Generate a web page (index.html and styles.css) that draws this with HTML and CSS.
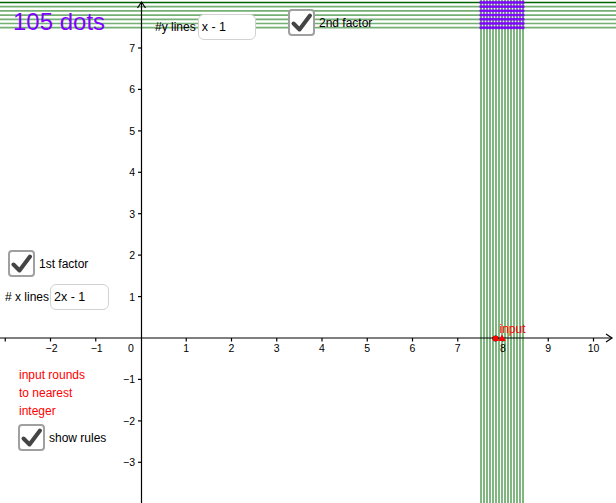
FILE: index.html
```html
<!DOCTYPE html>
<html>
<head>
<meta charset="utf-8">
<link rel="stylesheet" href="styles.css">
</head>
<body>
<div class="applet">
  <svg class="graph" width="616" height="503" viewBox="0 0 616 503">
    <defs>
      <pattern id="dotpat" x="479.5" y="0.4" width="3" height="4.2" patternUnits="userSpaceOnUse">
        <circle cx="1.5" cy="2.1" r="1.6" fill="#7f00ff"/>
      </pattern>
    </defs>
    <g class="vlines">
      <line x1="481" y1="0" x2="481" y2="503"/><line x1="484" y1="0" x2="484" y2="503"/><line x1="487" y1="0" x2="487" y2="503"/>
      <line x1="490" y1="0" x2="490" y2="503"/><line x1="493" y1="0" x2="493" y2="503"/><line x1="496" y1="0" x2="496" y2="503"/>
      <line x1="499" y1="0" x2="499" y2="503"/><line x1="502" y1="0" x2="502" y2="503"/><line x1="505" y1="0" x2="505" y2="503"/>
      <line x1="508" y1="0" x2="508" y2="503"/><line x1="511" y1="0" x2="511" y2="503"/><line x1="514" y1="0" x2="514" y2="503"/>
      <line x1="517" y1="0" x2="517" y2="503"/><line x1="520" y1="0" x2="520" y2="503"/><line x1="523" y1="0" x2="523" y2="503"/>
    </g>
    <g class="hlines">
      <line class="top" x1="0" y1="2.5" x2="616" y2="2.5"/>
      <line x1="0" y1="6.7" x2="616" y2="6.7"/>
      <line x1="0" y1="10.9" x2="616" y2="10.9"/>
      <line x1="0" y1="15.1" x2="616" y2="15.1"/>
      <line x1="0" y1="19.3" x2="616" y2="19.3"/>
      <line x1="0" y1="23.5" x2="616" y2="23.5"/>
      <line x1="0" y1="27.7" x2="616" y2="27.7"/>
    </g>
    <rect x="479.5" y="0.4" width="45" height="29.4" fill="url(#dotpat)"/>
    <g class="axes">
      <line x1="0" y1="338" x2="612" y2="338"/>
      <polyline class="arrow" points="606,334 612,338 606,342"/>
      <line x1="141.5" y1="503" x2="141.5" y2="2"/>
      <polyline class="arrow" points="137.5,8 141.5,2 145.5,8"/>
      <g class="ticks">
        <line x1="5.25" y1="338" x2="5.25" y2="341.5"/><line x1="50.5" y1="338" x2="50.5" y2="341.5"/>
        <line x1="95.75" y1="338" x2="95.75" y2="341.5"/><line x1="186.25" y1="338" x2="186.25" y2="341.5"/>
        <line x1="231.5" y1="338" x2="231.5" y2="341.5"/><line x1="276.75" y1="338" x2="276.75" y2="341.5"/>
        <line x1="322" y1="338" x2="322" y2="341.5"/><line x1="367.25" y1="338" x2="367.25" y2="341.5"/>
        <line x1="412.5" y1="338" x2="412.5" y2="341.5"/><line x1="457.75" y1="338" x2="457.75" y2="341.5"/>
        <line x1="503" y1="338" x2="503" y2="341.5"/><line x1="548.25" y1="338" x2="548.25" y2="341.5"/>
        <line x1="593.5" y1="338" x2="593.5" y2="341.5"/>
        <line x1="138" y1="48" x2="141.5" y2="48"/><line x1="138" y1="89.4" x2="141.5" y2="89.4"/>
        <line x1="138" y1="130.9" x2="141.5" y2="130.9"/><line x1="138" y1="172.3" x2="141.5" y2="172.3"/>
        <line x1="138" y1="213.7" x2="141.5" y2="213.7"/><line x1="138" y1="255.1" x2="141.5" y2="255.1"/>
        <line x1="138" y1="296.6" x2="141.5" y2="296.6"/><line x1="138" y1="379.4" x2="141.5" y2="379.4"/>
        <line x1="138" y1="420.9" x2="141.5" y2="420.9"/><line x1="138" y1="462.3" x2="141.5" y2="462.3"/>
      </g>
    </g>
    <g class="xlabels">
      <text x="51.5" y="352">−2</text><text x="96.7" y="352">−1</text>
      <text x="131" y="352">0</text>
      <text x="186.25" y="352">1</text><text x="231.5" y="352">2</text><text x="276.75" y="352">3</text>
      <text x="322" y="352">4</text><text x="367.25" y="352">5</text><text x="412.5" y="352">6</text>
      <text x="457.75" y="352">7</text><text x="503" y="352">8</text><text x="548.25" y="352">9</text>
      <text x="593.5" y="352">10</text>
    </g>
    <g class="ylabels">
      <text x="135" y="52">7</text><text x="135" y="93.4">6</text><text x="135" y="134.9">5</text>
      <text x="135" y="176.3">4</text><text x="135" y="217.7">3</text><text x="135" y="259.1">2</text>
      <text x="135" y="300.6">1</text><text x="135" y="383.4">−1</text><text x="135" y="424.9">−2</text>
      <text x="135" y="466.3">−3</text>
    </g>
    <g class="inputpt">
      <circle cx="495.5" cy="338.5" r="3" fill="#000"/>
      <rect x="493" y="336" width="5" height="5" fill="#ff0000"/>
      <polygon points="502,334.5 505.8,341 498.2,341" fill="#ff0000"/>
      <text x="499.5" y="333">input</text>
    </g>
  </svg>

  <div class="title">105 dots</div>

  <div class="field ylines">
    <span class="flabel">#y lines</span>
    <div class="box">x - 1</div>
  </div>

  <div class="check factor2">
    <div class="cb"><svg width="23" height="23" viewBox="0 0 23 23"><polyline points="3.5,12.5 9.5,18.5 20,4.5"/></svg></div>
    <span>2nd factor</span>
  </div>

  <div class="check factor1">
    <div class="cb"><svg width="23" height="23" viewBox="0 0 23 23"><polyline points="3.5,12.5 9.5,18.5 20,4.5"/></svg></div>
    <span>1st factor</span>
  </div>

  <div class="field xlines">
    <span class="flabel"># x lines</span>
    <div class="box">2x - 1</div>
  </div>

  <div class="rules-note">input rounds<br>to nearest<br>integer</div>

  <div class="check rules">
    <div class="cb"><svg width="23" height="23" viewBox="0 0 23 23"><polyline points="3.5,12.5 9.5,18.5 20,4.5"/></svg></div>
    <span>show rules</span>
  </div>
</div>
</body>
</html>
```
FILE: styles.css
```css
html, body {
  margin: 0;
  padding: 0;
  background: #ffffff;
  overflow: hidden;
}

.applet {
  position: relative;
  width: 616px;
  height: 503px;
  background: #ffffff;
  font-family: "Liberation Sans", Arial, sans-serif;
  color: #000;
}

.graph {
  display: block;
}

.vlines line {
  stroke: #2a852a;
  stroke-opacity: 0.7;
  stroke-width: 1.7;
}

.hlines line {
  stroke: #2a852a;
  stroke-opacity: 0.65;
  stroke-width: 1.7;
}

.hlines line.top {
  stroke: #006400;
  stroke-opacity: 1;
  stroke-width: 1.4;
}

.axes line,
.axes polyline {
  stroke: #000;
  stroke-width: 1.2;
  fill: none;
}

.xlabels text,
.ylabels text {
  font-family: "Liberation Sans", Arial, sans-serif;
  font-size: 10.5px;
  fill: #000;
}

.xlabels text {
  text-anchor: middle;
}

.ylabels text {
  text-anchor: end;
}

.inputpt text {
  font-family: "Liberation Sans", Arial, sans-serif;
  font-size: 12px;
  fill: #ff0000;
}

.title {
  position: absolute;
  left: 13px;
  top: 8px;
  font-size: 24px;
  line-height: 28px;
  color: #7f00ff;
}

.field {
  position: absolute;
  display: flex;
  align-items: center;
  gap: 2px;
  font-size: 12px;
}

.field .box {
  box-sizing: border-box;
  height: 26px;
  border: 1px solid #d2d2d2;
  border-radius: 6px;
  background: #fff;
  padding: 0 3px;
  display: flex;
  align-items: center;
  font-size: 12.5px;
}

.ylines {
  left: 155px;
  top: 14px;
}

.ylines .box {
  width: 58px;
}

.xlines {
  left: 5px;
  top: 284px;
  gap: 1px;
}

.xlines .box {
  width: 59px;
}

.check {
  position: absolute;
  display: flex;
  align-items: center;
  gap: 4px;
  font-size: 12px;
}

.check .cb {
  box-sizing: border-box;
  width: 27px;
  height: 27px;
  border: 2px solid #a0a0a0;
  border-radius: 4px;
  background: #fff;
  display: flex;
  align-items: center;
  justify-content: center;
}

.check .cb svg polyline {
  fill: none;
  stroke: #444444;
  stroke-width: 4;
  stroke-linecap: round;
  stroke-linejoin: round;
}

.factor2 {
  left: 288px;
  top: 9px;
}

.factor1 {
  left: 8px;
  top: 250px;
}

.rules {
  left: 18px;
  top: 424px;
}

.rules-note {
  position: absolute;
  left: 19px;
  top: 366px;
  font-size: 12px;
  line-height: 18px;
  color: #ff0000;
}
```
